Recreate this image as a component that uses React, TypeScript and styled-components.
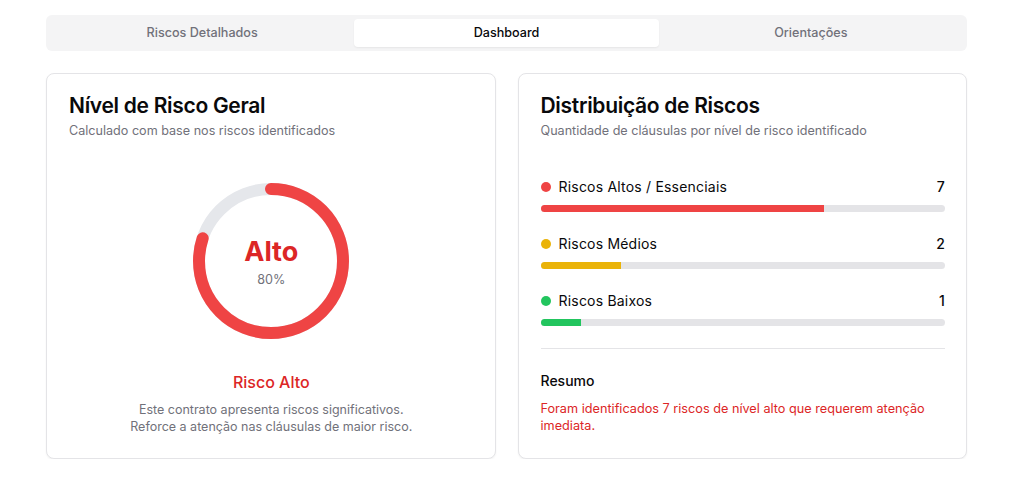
import * as React from 'react'
import styled, { createGlobalStyle } from 'styled-components'

const GlobalStyle = createGlobalStyle`
  body {
    margin: 0;
    background: #fff;
    font-family: Inter, 'Noto Sans', sans-serif;
    color: #09090b;
  }
`

const Page = styled.div`
  width: 921px;
  margin: 0 auto;
  padding-top: 15px;
`

const TabList = styled.div`
  display: grid;
  grid-template-columns: repeat(3, 1fr);
  height: 36px;
  padding: 4px;
  box-sizing: border-box;
  background: #f4f4f5;
  border-radius: 6px;
`

const Tab = styled.button<{ $active?: boolean }>`
  border: none;
  border-radius: 4px;
  font-family: inherit;
  font-size: 12.6px;
  font-weight: 500;
  padding: 0 0 1px;
  cursor: pointer;
  background: ${(p) => (p.$active ? '#fff' : 'transparent')};
  color: ${(p) => (p.$active ? '#09090b' : '#71717a')};
  box-shadow: ${(p) => (p.$active ? '0 1px 2px rgba(0,0,0,0.06)' : 'none')};
`

const Grid = styled.div`
  display: grid;
  grid-template-columns: 1fr 1fr;
  gap: 22px;
  margin-top: 22px;
`

const Card = styled.div`
  border: 1px solid #e4e4e7;
  border-radius: 8px;
  background: #fff;
  box-shadow: 0 1px 2px rgba(0, 0, 0, 0.05);
  padding: 20px 21px 23px 22px;
  display: flex;
  flex-direction: column;
`

const Title = styled.h2`
  margin: 0;
  font-size: 21px;
  font-weight: 600;
  line-height: 24px;
  letter-spacing: -0.3px;
`

const Subtitle = styled.p`
  margin: 4px 0 0;
  font-size: 12.6px;
  color: #71717a;
  line-height: 18px;
`

const GaugeWrap = styled.div`
  display: flex;
  flex-direction: column;
  align-items: center;
  margin-top: 43px;
`

const Donut = styled.div`
  position: relative;
  width: 156px;
  height: 156px;
`

const DonutLabel = styled.div`
  position: absolute;
  inset: 0;
  display: flex;
  flex-direction: column;
  align-items: center;
  justify-content: center;
`

const Level = styled.span`
  font-size: 27px;
  font-weight: 700;
  color: #dc2626;
  line-height: 32px;
`

const Percent = styled.span`
  font-size: 12.6px;
  color: #71717a;
  margin-top: 4px;
`

const RiskName = styled.div`
  margin-top: 33px;
  font-size: 16px;
  font-weight: 500;
  color: #dc2626;
`

const RiskText = styled.p`
  margin: 9px 0 0;
  font-size: 12.5px;
  line-height: 17px;
  color: #71717a;
  text-align: center;
`

const Bars = styled.div`
  display: flex;
  flex-direction: column;
  gap: 23px;
  margin-top: 38px;
`

const BarItem = styled.div`
  display: flex;
  flex-direction: column;
  gap: 10px;
`

const BarHead = styled.div`
  display: flex;
  align-items: center;
  justify-content: space-between;
  font-size: 14px;
  letter-spacing: 0.2px;
`

const BarLabel = styled.span`
  display: flex;
  align-items: center;
  gap: 8px;
`

const Dot = styled.span<{ $color: string }>`
  width: 10px;
  height: 10px;
  border-radius: 50%;
  background: ${(p) => p.$color};
`

const Count = styled.span`
  font-weight: 500;
`

const Track = styled.div`
  height: 7px;
  border-radius: 999px;
  background: #e4e4e7;
  overflow: hidden;
`

const Fill = styled.div<{ $color: string }>`
  height: 100%;
  background: ${(p) => p.$color};
`

const Divider = styled.hr`
  border: none;
  border-top: 1px solid #e4e4e7;
  margin: 22px 0 0;
`

const Summary = styled.div`
  margin-top: 23px;
`

const SummaryTitle = styled.div`
  font-size: 14px;
  font-weight: 500;
`

const SummaryText = styled.p`
  margin: 11px 0 0;
  font-size: 12.7px;
  line-height: 17px;
  color: #dc2626;
`

const risks = [
  { label: 'Riscos Altos / Essenciais', count: 7, color: '#ef4444' },
  { label: 'Riscos Médios', count: 2, color: '#eab308' },
  { label: 'Riscos Baixos', count: 1, color: '#22c55e' },
]

const RiskDonut = ({ value }: { value: number }) => {
  const r = 72
  const c = 2 * Math.PI * r
  return (
    <Donut>
      <svg width="156" height="156" viewBox="0 0 156 156">
        <circle cx="78" cy="78" r={r} fill="none" stroke="#e5e7eb" strokeWidth="12" />
        <circle
          cx="78"
          cy="78"
          r={r}
          fill="none"
          stroke="#ef4444"
          strokeWidth="12"
          strokeLinecap="round"
          strokeDasharray={`${c * value} ${c}`}
          transform="rotate(-90 78 78)"
        />
      </svg>
      <DonutLabel>
        <Level>Alto</Level>
        <Percent>{Math.round(value * 100)}%</Percent>
      </DonutLabel>
    </Donut>
  )
}

export default function App() {
  const total = 10
  return (
    <Page>
      <GlobalStyle />
      <TabList>
        <Tab>Riscos Detalhados</Tab>
        <Tab $active>Dashboard</Tab>
        <Tab>Orientações</Tab>
      </TabList>
      <Grid>
        <Card>
          <Title>Nível de Risco Geral</Title>
          <Subtitle>Calculado com base nos riscos identificados</Subtitle>
          <GaugeWrap>
            <RiskDonut value={0.8} />
            <RiskName>Risco Alto</RiskName>
            <RiskText>
              Este contrato apresenta riscos significativos.
              <br />
              Reforce a atenção nas cláusulas de maior risco.
            </RiskText>
          </GaugeWrap>
        </Card>
        <Card>
          <Title>Distribuição de Riscos</Title>
          <Subtitle>Quantidade de cláusulas por nível de risco identificado</Subtitle>
          <Bars>
            {risks.map((r) => (
              <BarItem key={r.label}>
                <BarHead>
                  <BarLabel>
                    <Dot $color={r.color} />
                    {r.label}
                  </BarLabel>
                  <Count>{r.count}</Count>
                </BarHead>
                <Track>
                  <Fill $color={r.color} style={{ width: `${(r.count / total) * 100}%` }} />
                </Track>
              </BarItem>
            ))}
          </Bars>
          <Divider />
          <Summary>
            <SummaryTitle>Resumo</SummaryTitle>
            <SummaryText>
              Foram identificados 7 riscos de nível alto que requerem atenção imediata.
            </SummaryText>
          </Summary>
        </Card>
      </Grid>
    </Page>
  )
}
